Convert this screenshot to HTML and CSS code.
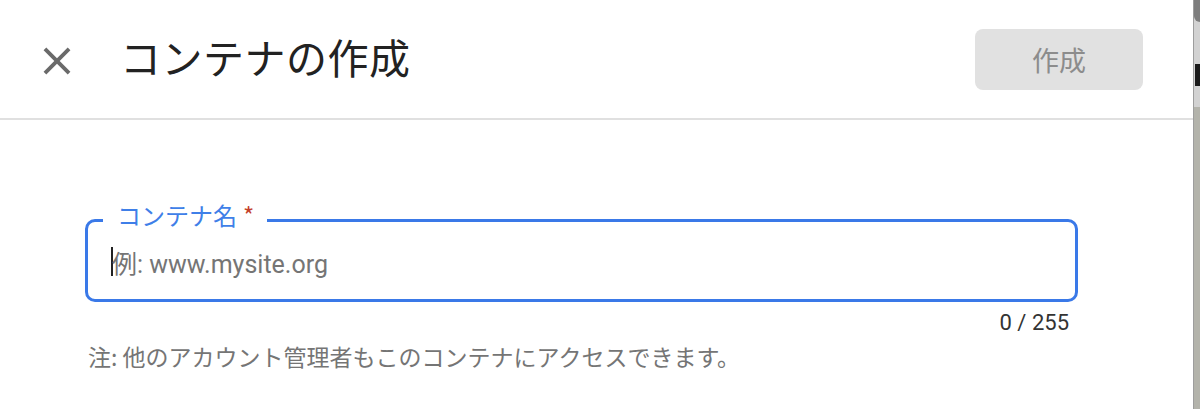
FILE: index.html
```html
<!DOCTYPE html>
<html lang="ja">
<head>
<meta charset="utf-8">
<title>コンテナの作成</title>
<link rel="stylesheet" href="styles.css">
</head>
<body>
<div class="screen">
  <div class="dialog">
    <header class="bar">
      <svg class="close" viewBox="0 0 24 24" aria-hidden="true"><path d="M19 6.41L17.59 5 12 10.59 6.41 5 5 6.41 10.59 12 5 17.59 6.41 19 12 13.41 17.59 19 19 17.59 13.41 12z"/></svg>
      <h1 class="title">コンテナの作成</h1>
      <button class="create" disabled>作成</button>
    </header>
    <main class="content">
      <fieldset class="field">
        <legend class="label">コンテナ名<span class="req">*</span></legend>
        <div class="input"><span class="caret"></span><span class="ph">例: www.mysite.org</span></div>
      </fieldset>
      <div class="count">0 / 255</div>
      <p class="note">注: 他のアカウント管理者もこのコンテナにアクセスできます。</p>
    </main>
  </div>
  <div class="edge">
    <div class="edge-top"><span class="knob"></span><span class="mark"></span></div>
    <div class="edge-bottom"></div>
  </div>
</div>
</body>
</html>
```
FILE: styles.css
```css
html, body {
  margin: 0;
  padding: 0;
  background: #fff;
}
body {
  font-family: "Noto Sans CJK JP", "Noto Sans", sans-serif;
  color: #212121;
}
.screen {
  display: flex;
  height: 409px;
  overflow: hidden;
}
.dialog {
  flex: 1;
  min-width: 0;
}
.bar {
  height: 118px;
  border-bottom: 2px solid #e0e0e0;
  display: flex;
  align-items: center;
  padding: 0 50px 0 34px;
}
.close {
  width: 46px;
  height: 46px;
  fill: #6a6a6a;
  margin-top: 4px;
  flex: none;
}
.title {
  margin: 0 0 4px 40px;
  font-weight: 400;
  font-size: 41px;
  line-height: 1.2;
  color: #222;
  flex: 1;
  letter-spacing: 0.5px;
}
.create {
  width: 168px;
  height: 61px;
  border: none;
  border-radius: 8px;
  background: #e1e1e1;
  color: #8c8c8c;
  font-family: "Noto Sans CJK JP", sans-serif;
  font-size: 27px;
  padding: 0;
  margin-top: 1px;
}
.content {
  padding: 81px 115px 0 85px;
}
.field {
  margin: 0;
  padding: 0;
  border: 3px solid #3a79e8;
  border-radius: 10px;
  min-width: 0;
}
.label {
  margin-left: 15px;
  padding: 0 13px 10px 14px;
  font-size: 24px;
  line-height: 1.2;
  color: #3f7fe8;
}
.req {
  color: #c4402a;
  margin-left: 6px;
}
.input {
  height: 59px;
  display: flex;
  align-items: center;
  padding-left: 23px;
  padding-bottom: 15px;
  box-sizing: border-box;
  font-family: "Roboto", "Noto Sans CJK JP", sans-serif;
  font-size: 25px;
  color: #757575;
}
.caret {
  width: 2px;
  height: 29px;
  background: #222;
  margin-right: -1px;
  flex: none;
}
.count {
  margin-top: 8px;
  text-align: right;
  padding-right: 9px;
  font-family: "Roboto", sans-serif;
  font-size: 22px;
  color: #333;
}
.note {
  margin: 5px 0 0 3px;
  font-size: 23px;
  line-height: 1.4;
  color: #757575;
}
.edge {
  width: 6px;
  flex: none;
  display: flex;
  flex-direction: column;
  border-left: 1px solid #9d9d9d;
}
.edge-top {
  height: 107px;
  background: #d2d2d2;
  display: flex;
  flex-direction: column;
}
.knob {
  height: 22px;
  background: #7d7d7d;
  border-radius: 0 0 0 6px;
}
.mark {
  margin-top: 42px;
  margin-left: 1px;
  height: 22px;
  background: #1a1a1a;
}
.edge-bottom {
  flex: 1;
  background: #b3b3ab;
}
```
